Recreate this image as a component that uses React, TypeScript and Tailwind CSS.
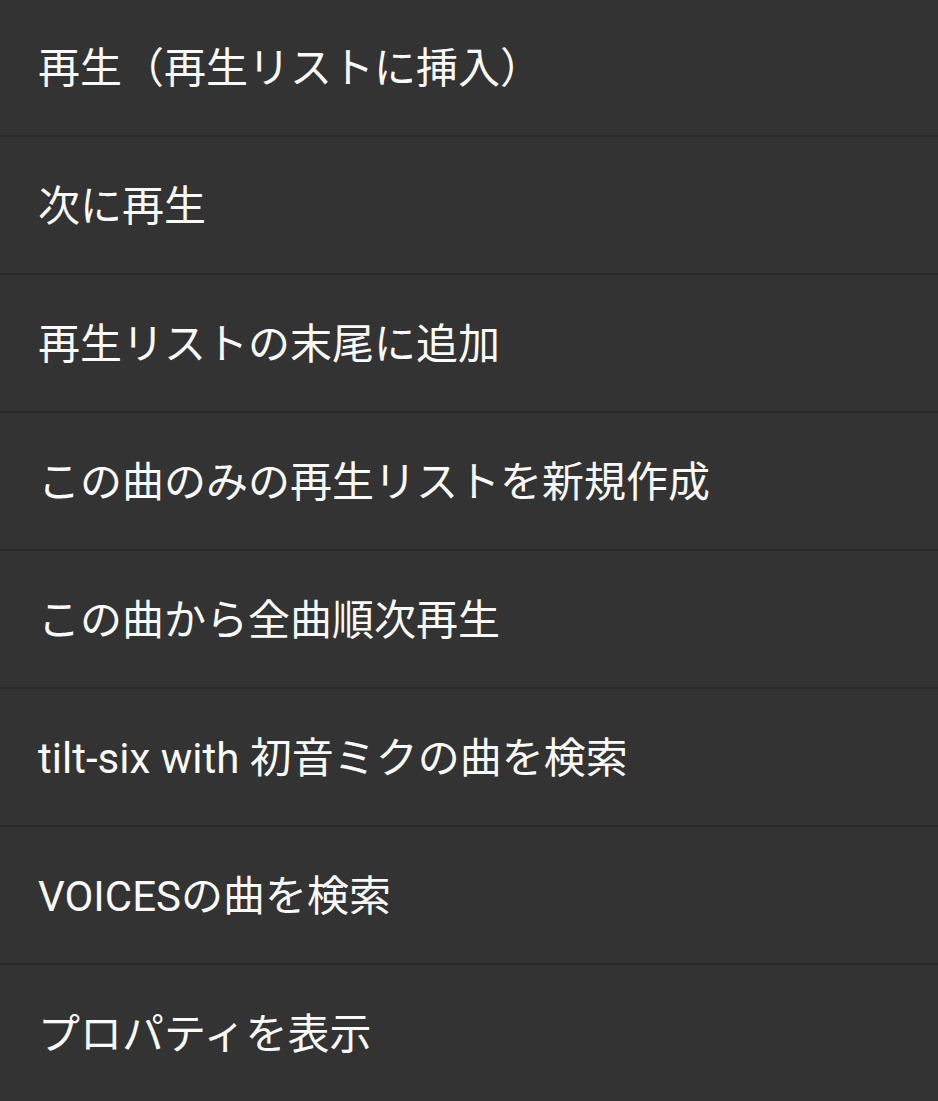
import React from "react";

const items = [
  "再生（再生リストに挿入）",
  "次に再生",
  "再生リストの末尾に追加",
  "この曲のみの再生リストを新規作成",
  "この曲から全曲順次再生",
  "tilt-six with 初音ミクの曲を検索",
  "VOICESの曲を検索",
  "プロパティを表示",
];

export default function App() {
  return (
    <div
      className="w-[938px] h-[1101px] overflow-hidden bg-[#333333] flex flex-col"
      style={{ fontFamily: "Roboto, 'Noto Sans CJK JP', sans-serif" }}
    >
      {items.map((t, i) => (
        <div
          key={i}
          className={
            "flex items-center pl-[38px] pt-[3px] text-[42px] text-[#fafafa] leading-none shrink-0 " +
            (i === 0 ? "h-[132px]" : "h-[133px]") +
            (i < items.length - 1 ? " border-b-2 border-[#2a2a2a]" : "")
          }
          style={{ boxSizing: "content-box" }}
        >
          {t}
        </div>
      ))}
      <div className="flex-1" />
      <div className="h-[1px] w-full bg-[linear-gradient(90deg,#111_0%,#111_62%,#3a1a1a_66%,#2a1e3e_75%,#1a1a40_82%,#3a1830_90%,#1a2030_100%)]" />
    </div>
  );
}
